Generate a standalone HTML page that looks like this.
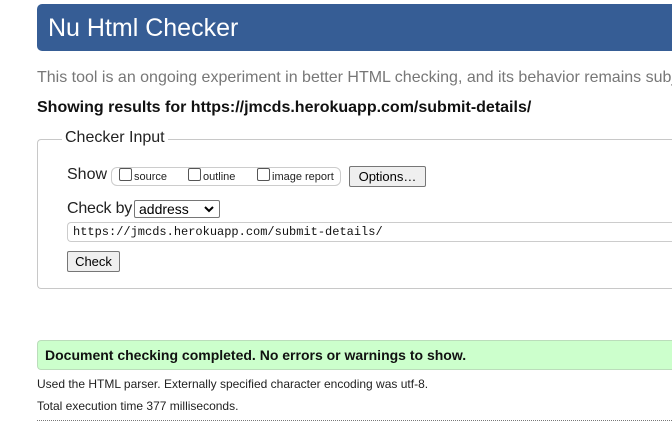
<!DOCTYPE html>
<html><head><meta charset="utf-8"><style>
html,body{margin:0;padding:0;width:672px;height:436px;overflow:hidden;background:#fff;font-family:"Liberation Sans",Arial,sans-serif;color:#222}
.a{position:absolute;white-space:nowrap}
.hdr{left:37px;top:4px;width:635px;height:47px;background:#365d95;border-radius:5px 0 0 5px}
.hdr span{position:absolute;left:11px;top:10px;font-size:25px;color:#fff}
.fs{left:37px;top:139px;width:635px;height:150px;border:1px solid #c8c8c8;border-right:none;border-radius:4px 0 0 4px;box-sizing:border-box}
.cb{display:inline-block;width:11px;height:11px;border:1px solid #555;border-radius:2px;background:#fff;vertical-align:-1px;margin-right:2px}
.btn{background:#efefef;border:1px solid #767676;border-radius:2px;font-size:13px;color:#000;text-align:center;box-sizing:border-box}
</style></head><body>
<div class="a hdr"><span>Nu Html Checker</span></div>
<div class="a" style="left:37px;top:69px;font-size:16px;color:#777">This tool is an ongoing experiment in better HTML checking, and its behavior remains subject to change</div>
<div class="a" style="left:37px;top:99px;font-size:16px;font-weight:bold;color:#111">Showing results for https://jmcds.herokuapp.com/submit-details/</div>
<div class="a fs"></div>
<div class="a" style="left:62px;top:129px;background:#fff;padding:0 3px;font-size:16px;color:#222">Checker Input</div>
<div class="a" style="left:67px;top:166px;font-size:16px">Show</div>
<div class="a" style="left:111px;top:167px;width:228px;height:17px;border:1px solid #ccc;border-radius:6px;font-size:11px;line-height:17px">
<span style="position:absolute;left:7px;top:0"><span class="cb"></span>source</span>
<span style="position:absolute;left:76px;top:0"><span class="cb"></span>outline</span>
<span style="position:absolute;left:145px;top:0"><span class="cb"></span>image report</span>
</div>
<div class="a btn" style="left:349px;top:166px;width:77px;height:21px;line-height:19px">Options…</div>
<div class="a" style="left:67px;top:200px;font-size:16px;letter-spacing:-0.2px">Check by</div>
<div class="a" style="left:134px;top:200px;width:86px;height:18px;border:1px solid #767676;border-radius:2px;box-sizing:border-box;font-size:14px;line-height:16px;padding-left:4px;color:#000;background:#fff">address
<svg style="position:absolute;right:5px;top:5px" width="10" height="7" viewBox="0 0 10 7"><path d="M1 1l4 4 4-4" stroke="#000" stroke-width="2" fill="none"/></svg></div>
<div class="a" style="left:67px;top:222px;width:605px;height:20px;border:1px solid #ccc;border-right:none;border-radius:4px 0 0 4px;box-sizing:border-box;font-family:'Liberation Mono','DejaVu Sans Mono',monospace;font-size:12px;line-height:18px;padding-left:5px;color:#111">https://jmcds.herokuapp.com/submit-details/</div>
<div class="a btn" style="left:67px;top:251px;width:53px;height:21px;line-height:19px">Check</div>
<div class="a" style="left:37px;top:340px;width:635px;height:30px;background:#ccffcc;border:1px solid #bbddbb;border-right:none;border-radius:4px 0 0 4px;box-sizing:border-box"></div>
<div class="a" style="left:45px;top:347px;font-size:14px;font-weight:bold;color:#111">Document checking completed. No errors or warnings to show.</div>
<div class="a" style="left:37px;top:377px;font-size:12px;color:#222">Used the HTML parser. Externally specified character encoding was utf-8.</div>
<div class="a" style="left:37px;top:399px;font-size:12px;color:#222">Total execution time 377 milliseconds.</div>
<div class="a" style="left:37px;top:420px;width:635px;border-top:1px dotted #777"></div>
</body></html>
